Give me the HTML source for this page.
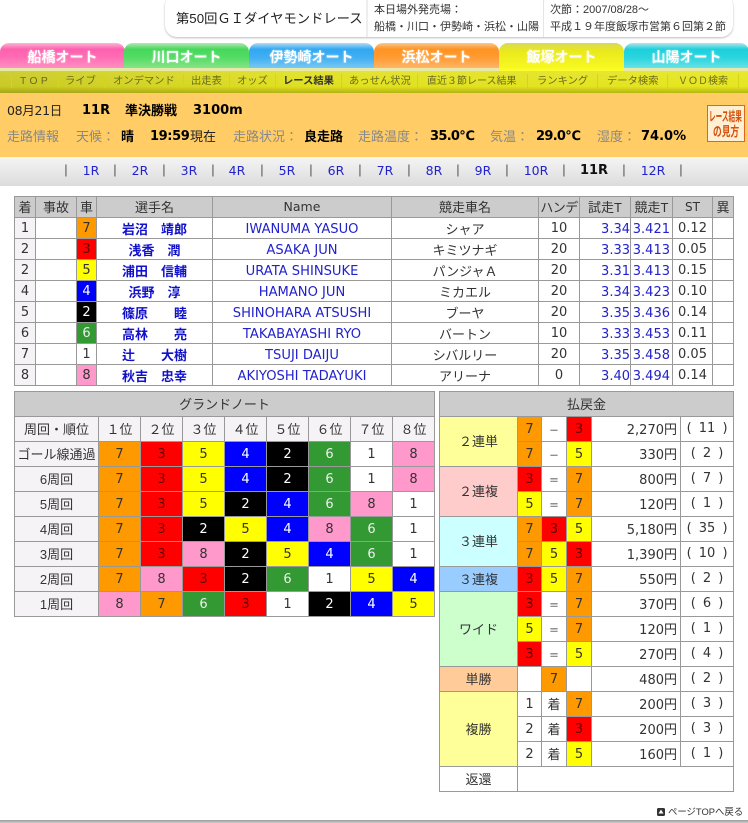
<!DOCTYPE html>
<html lang="ja"><head><meta charset="utf-8"><title>レース結果</title>
<style>
html,body{margin:0;padding:0;background:#fff}
body{width:748px;height:823px;position:relative;overflow:hidden;font-family:"DejaVu Sans","Noto Sans CJK JP",sans-serif;font-size:12px;color:#333}
.a{position:absolute;white-space:nowrap;line-height:16px}
.jp{font-family:"Liberation Sans","Noto Sans CJK JP",sans-serif}
.tab{position:absolute;top:43px;height:25px;width:125px;border-radius:9px 9px 0 0;text-align:center;color:#fff;font:bold 14px/28px "Liberation Sans","Noto Sans CJK JP",sans-serif;box-sizing:border-box;text-shadow:0 0 2px rgba(255,255,255,.6)}
.nv{position:absolute;top:75px;font:10.3px/14px "Liberation Sans","Noto Sans CJK JP",sans-serif;color:#6a6a20;white-space:nowrap}
.sp{position:absolute;top:74px;width:1px;height:14px;background:#d4d41c}
.g{position:absolute;color:#888;font:13px/16px "Liberation Sans","Noto Sans CJK JP",sans-serif;white-space:nowrap}
.b{position:absolute;color:#000;font:bold 14px/16px "DejaVu Sans","Noto Sans CJK JP",sans-serif;white-space:nowrap}
.r{position:absolute;top:163px;font:12.5px/16px "DejaVu Sans",sans-serif;color:#22c;transform:translateX(-50%);white-space:nowrap}
.s{position:absolute;top:162px;font:13px/16px "Liberation Sans",sans-serif;color:#555;transform:translateX(-50%)}
table{position:absolute;border-collapse:collapse;table-layout:fixed;border:1px solid #999;font-size:13px}
td,th{border:1px solid #999;padding:0;text-align:center;font-weight:normal;overflow:hidden;white-space:nowrap;box-sizing:border-box}
th{background:#ccc;font-family:"Liberation Sans","Noto Sans CJK JP",sans-serif;font-size:13px;padding-bottom:1px}
#t1 td,#t1 th{height:21px}
#t2 td,#t2 th,#t3 td,#t3 th{height:25px}
.l{background:#f6f3f6}
.n{color:#11c;font:bold 13px "Liberation Sans","Noto Sans CJK JP",sans-serif;white-space:pre}
#t1 td.e{color:#22c;font-size:13.1px;padding-top:3px}
#t1 td.t{color:#22c;text-align:right;font-size:13px;padding-top:2px}
.k{font:13px "Liberation Sans","Noto Sans CJK JP",sans-serif}
#t2 td.k,#t3 td.k{padding-bottom:2px}
.c7{background:#f90}.c3{background:#f00;color:#600}.c5{background:#ff0}.c4{background:#00f;color:#fff}.c2{background:#000;color:#fff}.c6{background:#393;color:#eee}.c1{background:#fff}.c8{background:#f9c}
#t3 td.y{text-align:right;padding:0 3px 2px 0;font-size:13px}
#t3 td.p{font-size:13px;word-spacing:3px;padding-bottom:1px}
.d{font-size:10px;font-family:"Liberation Sans","Noto Sans CJK JP",sans-serif;color:#222}
</style></head><body>

<div style="position:absolute;left:165px;top:-6px;width:568px;height:43px;border-radius:12px;background:#fff;box-shadow:0 1px 2px #bbb;"></div>
<div style="position:absolute;left:366px;top:0;width:2px;height:37px;background:#eee"></div>
<div style="position:absolute;left:543px;top:0;width:1px;height:37px;background:#e4e4e4"></div>
<div class="a jp" style="left:176px;top:11px;font-size:13.3px;color:#222">第50回ＧＩダイヤモンドレース</div>
<div class="a jp" style="left:374px;top:2px;font-size:11px;color:#333">本日場外発売場：</div>
<div class="a jp" style="left:374px;top:19px;font-size:11px;color:#333">船橋・川口・伊勢崎・浜松・山陽</div>
<div class="a jp" style="left:550px;top:2px;font-size:11px;color:#333">次節：2007/08/28～</div>
<div class="a jp" style="left:550px;top:19px;font-size:11px;color:#333">平成１９年度飯塚市営第６回第２節</div>

<div style="position:absolute;left:0;top:68px;width:748px;height:3px;background:#e8e8a8"></div>
<div class="tab" style="left:0;background:linear-gradient(#fbb6d6,#ff5fae 25%,#ff6fb4 60%,#ff8fc4)">船橋オート</div>
<div class="tab" style="left:124px;background:linear-gradient(#b4e8b4,#45d85a 25%,#55dc66 60%,#86e486)">川口オート</div>
<div class="tab" style="left:249px;background:linear-gradient(#b4dcf4,#2fa8f2 25%,#42b0f2 60%,#78c8f4)">伊勢崎オート</div>
<div class="tab" style="left:374px;background:linear-gradient(#f8c890,#ff9322 25%,#ff9c33 60%,#ffb566)">浜松オート</div>
<div class="tab" style="left:499px;height:29px;background:linear-gradient(#d8d860,#e8e81c 25%,#f8f820 85%,#ffff33)">飯塚オート</div>
<div class="tab" style="left:624px;background:linear-gradient(#b4e4e8,#1cd0dc 25%,#2cd4de 60%,#66e2e8)">山陽オート</div>

<div style="position:absolute;left:0;top:71px;width:748px;height:22px;background:linear-gradient(90deg,#c9c926,#e0e020 40%,#e6e620);"></div>
<div style="position:absolute;left:0;top:71px;width:748px;height:22px;background:linear-gradient(rgba(255,255,255,.08),rgba(255,255,255,0) 70%,rgba(110,110,0,.4))"></div>
<div class="nv" style="left:20px;letter-spacing:3.4px">TOP</div>
<div class="nv" style="left:65px">ライブ</div>
<div class="nv" style="left:113px">オンデマンド</div>
<div class="nv" style="left:191px">出走表</div>
<div class="nv" style="left:237px">オッズ</div>
<div class="nv" style="left:283px;color:#333;font-weight:bold">レース結果</div>
<div class="nv" style="left:349px">あっせん状況</div>
<div class="nv" style="left:427px;font-size:10px">直近３節レース結果</div>
<div class="nv" style="left:537px">ランキング</div>
<div class="nv" style="left:607px">データ検索</div>
<div class="nv" style="left:678px;font-size:10px">ＶＯＤ検索</div>
<div class="sp" style="left:11px"></div><div class="sp" style="left:58px"></div><div class="sp" style="left:104px"></div><div class="sp" style="left:183px"></div><div class="sp" style="left:229px"></div><div class="sp" style="left:275px"></div><div class="sp" style="left:341px"></div><div class="sp" style="left:417px"></div><div class="sp" style="left:527px"></div><div class="sp" style="left:597px"></div><div class="sp" style="left:667px"></div><div class="sp" style="left:738px"></div>

<div style="position:absolute;left:0;top:93px;width:748px;height:64px;background:#fc6"></div>
<div class="a" style="left:7px;top:103px;font-size:12.5px;color:#222;font-family:'DejaVu Sans','Noto Sans CJK JP',sans-serif;letter-spacing:-.3px">08月21日</div>
<div class="b" style="left:82px;top:103px;font-size:13px">11R</div>
<div class="b" style="left:125px;top:103px;font-size:13px;font-family:'Liberation Sans','Noto Sans CJK JP',sans-serif">準決勝戦</div>
<div class="b" style="left:193px;top:103px;font-size:13px">3100m</div>
<div class="g" style="left:7px;top:129px">走路情報</div>
<div class="g" style="left:76px;top:129px">天候：</div>
<div class="b" style="left:121px;top:129px;font-size:13px;font-family:'Liberation Sans','Noto Sans CJK JP',sans-serif">晴</div>
<div class="b" style="left:150px;top:129px;font-size:13px;letter-spacing:-.4px">19:59</div>
<div class="a jp" style="left:190px;top:129px;font-size:13px;color:#222">現在</div>
<div class="g" style="left:233px;top:129px">走路状況：</div>
<div class="b" style="left:304px;top:129px;font-size:13px;font-family:'Liberation Sans','Noto Sans CJK JP',sans-serif">良走路</div>
<div class="g" style="left:358px;top:129px">走路温度：</div>
<div class="b" style="left:430px;top:129px;font-size:13px;letter-spacing:-.7px">35.0℃</div>
<div class="g" style="left:490px;top:129px">気温：</div>
<div class="b" style="left:536px;top:129px;font-size:13px;letter-spacing:-.7px">29.0℃</div>
<div class="g" style="left:597px;top:129px">湿度：</div>
<div class="b" style="left:641px;top:129px;font-size:13px">74.0%</div>

<div style="position:absolute;left:707px;top:105px;width:36px;height:35px;border:1px solid #d96a1c;background:#fff0d4;color:#d4500c;font:bold 13px/15px 'Liberation Sans','Noto Sans CJK JP',sans-serif;overflow:hidden">
<div style="position:absolute;left:1px;top:3px;white-space:nowrap;transform-origin:0 0;transform:scaleX(.51)">レース結果</div>
<div style="position:absolute;left:5px;top:18px;white-space:nowrap;transform-origin:0 0;transform:scaleX(.67)">の見方</div>
</div>

<div style="position:absolute;left:0;top:157px;width:748px;height:29px;background:linear-gradient(#fbf8e8 0,#f2f2f2 10%,#dcdcdc)"></div>
<div class="s" style="left:66px">|</div><div class="s" style="left:115px">|</div><div class="s" style="left:164px">|</div><div class="s" style="left:213px">|</div><div class="s" style="left:262px">|</div><div class="s" style="left:311px">|</div><div class="s" style="left:360px">|</div><div class="s" style="left:409px">|</div><div class="s" style="left:458px">|</div><div class="s" style="left:507px">|</div><div class="s" style="left:564px">|</div><div class="s" style="left:624px">|</div><div class="s" style="left:681px">|</div>
<div class="r" style="left:91px">1R</div><div class="r" style="left:140px">2R</div><div class="r" style="left:189px">3R</div><div class="r" style="left:237px">4R</div><div class="r" style="left:287px">5R</div><div class="r" style="left:336px">6R</div><div class="r" style="left:385px">7R</div><div class="r" style="left:434px">8R</div><div class="r" style="left:483px">9R</div><div class="r" style="left:536px">10R</div>
<div class="r" style="left:594px;color:#111;font-weight:bold;font-size:13px">11R</div>
<div class="r" style="left:653px">12R</div>

<table id="t1" style="left:14px;top:196px;width:719px">
<col style="width:21px"><col style="width:41px"><col style="width:20px"><col style="width:116px"><col style="width:179px"><col style="width:147px"><col style="width:41px"><col style="width:51px"><col style="width:42px"><col style="width:40px"><col style="width:21px">
<tr><th>着</th><th>事故</th><th>車</th><th>選手名</th><th style="font-size:12.5px;font-family:'DejaVu Sans',sans-serif">Name</th><th>競走車名</th><th style="letter-spacing:-.5px">ハンデ</th><th>試走T</th><th>競走T</th><th style="font-family:'DejaVu Sans',sans-serif;font-size:12px">ST</th><th>異</th></tr>
<tr><td class="l">1</td><td></td><td class="c7">7</td><td class="n">岩沼　靖郎</td><td class="e">IWANUMA YASUO</td><td class="k">シャア</td><td>10</td><td class="t">3.34</td><td class="t" style="padding-right:2px">3.421</td><td>0.12</td><td></td></tr>
<tr><td class="l">2</td><td></td><td class="c3">3</td><td class="n">浅香　潤</td><td class="e">ASAKA JUN</td><td class="k">キミツナギ</td><td>20</td><td class="t">3.33</td><td class="t" style="padding-right:2px">3.413</td><td>0.05</td><td></td></tr>
<tr><td class="l">2</td><td></td><td class="c5">5</td><td class="n">浦田　信輔</td><td class="e">URATA SHINSUKE</td><td class="k">パンジャＡ</td><td>20</td><td class="t">3.31</td><td class="t" style="padding-right:2px">3.413</td><td>0.15</td><td></td></tr>
<tr><td class="l">4</td><td></td><td class="c4">4</td><td class="n">浜野　淳</td><td class="e">HAMANO JUN</td><td class="k">ミカエル</td><td>20</td><td class="t">3.34</td><td class="t" style="padding-right:2px">3.423</td><td>0.10</td><td></td></tr>
<tr><td class="l">5</td><td></td><td class="c2">2</td><td class="n">篠原　　睦</td><td class="e">SHINOHARA ATSUSHI</td><td class="k">ブーヤ</td><td>20</td><td class="t">3.35</td><td class="t" style="padding-right:2px">3.436</td><td>0.14</td><td></td></tr>
<tr><td class="l">6</td><td></td><td class="c6">6</td><td class="n">高林　　亮</td><td class="e">TAKABAYASHI RYO</td><td class="k">バートン</td><td>10</td><td class="t">3.33</td><td class="t" style="padding-right:2px">3.453</td><td>0.11</td><td></td></tr>
<tr><td class="l">7</td><td></td><td class="c1">1</td><td class="n">辻　　大樹</td><td class="e">TSUJI DAIJU</td><td class="k">シバルリー</td><td>20</td><td class="t">3.35</td><td class="t" style="padding-right:2px">3.458</td><td>0.05</td><td></td></tr>
<tr><td class="l">8</td><td></td><td class="c8">8</td><td class="n">秋吉　忠幸</td><td class="e">AKIYOSHI TADAYUKI</td><td class="k">アリーナ</td><td>0</td><td class="t">3.40</td><td class="t" style="padding-right:2px">3.494</td><td>0.14</td><td></td></tr>
</table>

<table id="t2" style="left:14px;top:391px;width:420px">
<col style="width:84px"><col style="width:42px"><col style="width:42px"><col style="width:42px"><col style="width:42px"><col style="width:42px"><col style="width:42px"><col style="width:42px"><col style="width:42px">
<tr><th colspan="9">グランドノート</th></tr>
<tr><td class="l k">周回・順位</td><td class="l k">１位</td><td class="l k">２位</td><td class="l k">３位</td><td class="l k">４位</td><td class="l k">５位</td><td class="l k">６位</td><td class="l k">７位</td><td class="l k">８位</td></tr>
<tr><td class="l k">ゴール線通過</td><td class="c7">7</td><td class="c3">3</td><td class="c5">5</td><td class="c4">4</td><td class="c2">2</td><td class="c6">6</td><td class="c1">1</td><td class="c8">8</td></tr>
<tr><td class="l k">6周回</td><td class="c7">7</td><td class="c3">3</td><td class="c5">5</td><td class="c4">4</td><td class="c2">2</td><td class="c6">6</td><td class="c1">1</td><td class="c8">8</td></tr>
<tr><td class="l k">5周回</td><td class="c7">7</td><td class="c3">3</td><td class="c5">5</td><td class="c2">2</td><td class="c4">4</td><td class="c6">6</td><td class="c8">8</td><td class="c1">1</td></tr>
<tr><td class="l k">4周回</td><td class="c7">7</td><td class="c3">3</td><td class="c2">2</td><td class="c5">5</td><td class="c4">4</td><td class="c8">8</td><td class="c6">6</td><td class="c1">1</td></tr>
<tr><td class="l k">3周回</td><td class="c7">7</td><td class="c3">3</td><td class="c8">8</td><td class="c2">2</td><td class="c5">5</td><td class="c4">4</td><td class="c6">6</td><td class="c1">1</td></tr>
<tr><td class="l k">2周回</td><td class="c7">7</td><td class="c8">8</td><td class="c3">3</td><td class="c2">2</td><td class="c6">6</td><td class="c1">1</td><td class="c5">5</td><td class="c4">4</td></tr>
<tr><td class="l k">1周回</td><td class="c8">8</td><td class="c7">7</td><td class="c6">6</td><td class="c3">3</td><td class="c1">1</td><td class="c2">2</td><td class="c4">4</td><td class="c5">5</td></tr>
</table>

<table id="t3" style="left:439px;top:391px;width:294px">
<col style="width:78px"><col style="width:24px"><col style="width:25px"><col style="width:25px"><col style="width:89px"><col style="width:53px">
<tr><th colspan="6">払戻金</th></tr>
<tr><td rowspan="2" class="k" style="background:#ff9">２連単</td><td class="c7">7</td><td class="d">－</td><td class="c3">3</td><td class="y">2,270円</td><td class="p">( 11 )</td></tr>
<tr><td class="c7">7</td><td class="d">－</td><td class="c5">5</td><td class="y">330円</td><td class="p">( 2 )</td></tr>
<tr><td rowspan="2" class="k" style="background:#fcc">２連複</td><td class="c3">3</td><td class="d">＝</td><td class="c7">7</td><td class="y">800円</td><td class="p">( 7 )</td></tr>
<tr><td class="c5">5</td><td class="d">＝</td><td class="c7">7</td><td class="y">120円</td><td class="p">( 1 )</td></tr>
<tr><td rowspan="2" class="k" style="background:#cff">３連単</td><td class="c7">7</td><td class="c3">3</td><td class="c5">5</td><td class="y">5,180円</td><td class="p">( 35 )</td></tr>
<tr><td class="c7">7</td><td class="c5">5</td><td class="c3">3</td><td class="y">1,390円</td><td class="p">( 10 )</td></tr>
<tr><td class="k" style="background:#9cf">３連複</td><td class="c3">3</td><td class="c5">5</td><td class="c7">7</td><td class="y">550円</td><td class="p">( 2 )</td></tr>
<tr><td rowspan="3" class="k" style="background:#cfc">ワイド</td><td class="c3">3</td><td class="d">＝</td><td class="c7">7</td><td class="y">370円</td><td class="p">( 6 )</td></tr>
<tr><td class="c5">5</td><td class="d">＝</td><td class="c7">7</td><td class="y">120円</td><td class="p">( 1 )</td></tr>
<tr><td class="c3">3</td><td class="d">＝</td><td class="c5">5</td><td class="y">270円</td><td class="p">( 4 )</td></tr>
<tr><td class="k" style="background:#fc9">単勝</td><td></td><td class="c7">7</td><td></td><td class="y">480円</td><td class="p">( 2 )</td></tr>
<tr><td rowspan="3" class="k" style="background:#ff9">複勝</td><td>1</td><td class="k">着</td><td class="c7">7</td><td class="y">200円</td><td class="p">( 3 )</td></tr>
<tr><td>2</td><td class="k">着</td><td class="c3">3</td><td class="y">200円</td><td class="p">( 3 )</td></tr>
<tr><td>2</td><td class="k">着</td><td class="c5">5</td><td class="y">160円</td><td class="p">( 1 )</td></tr>
<tr><td class="k">返還</td><td colspan="5"></td></tr>
</table>

<svg style="position:absolute;left:657px;top:808px" width="8" height="8" viewBox="0 0 8 8"><rect width="8" height="8" rx="1.5" fill="#333"/><path d="M4 1.5L6.5 5.5H1.5Z" fill="#fff"/></svg>
<div class="a jp" style="left:668px;top:804px;font-size:9.4px;color:#333">ページTOPへ戻る</div>
<div style="position:absolute;left:0;top:820px;width:748px;height:3px;background:linear-gradient(#999,#ccc)"></div>
</body></html>
